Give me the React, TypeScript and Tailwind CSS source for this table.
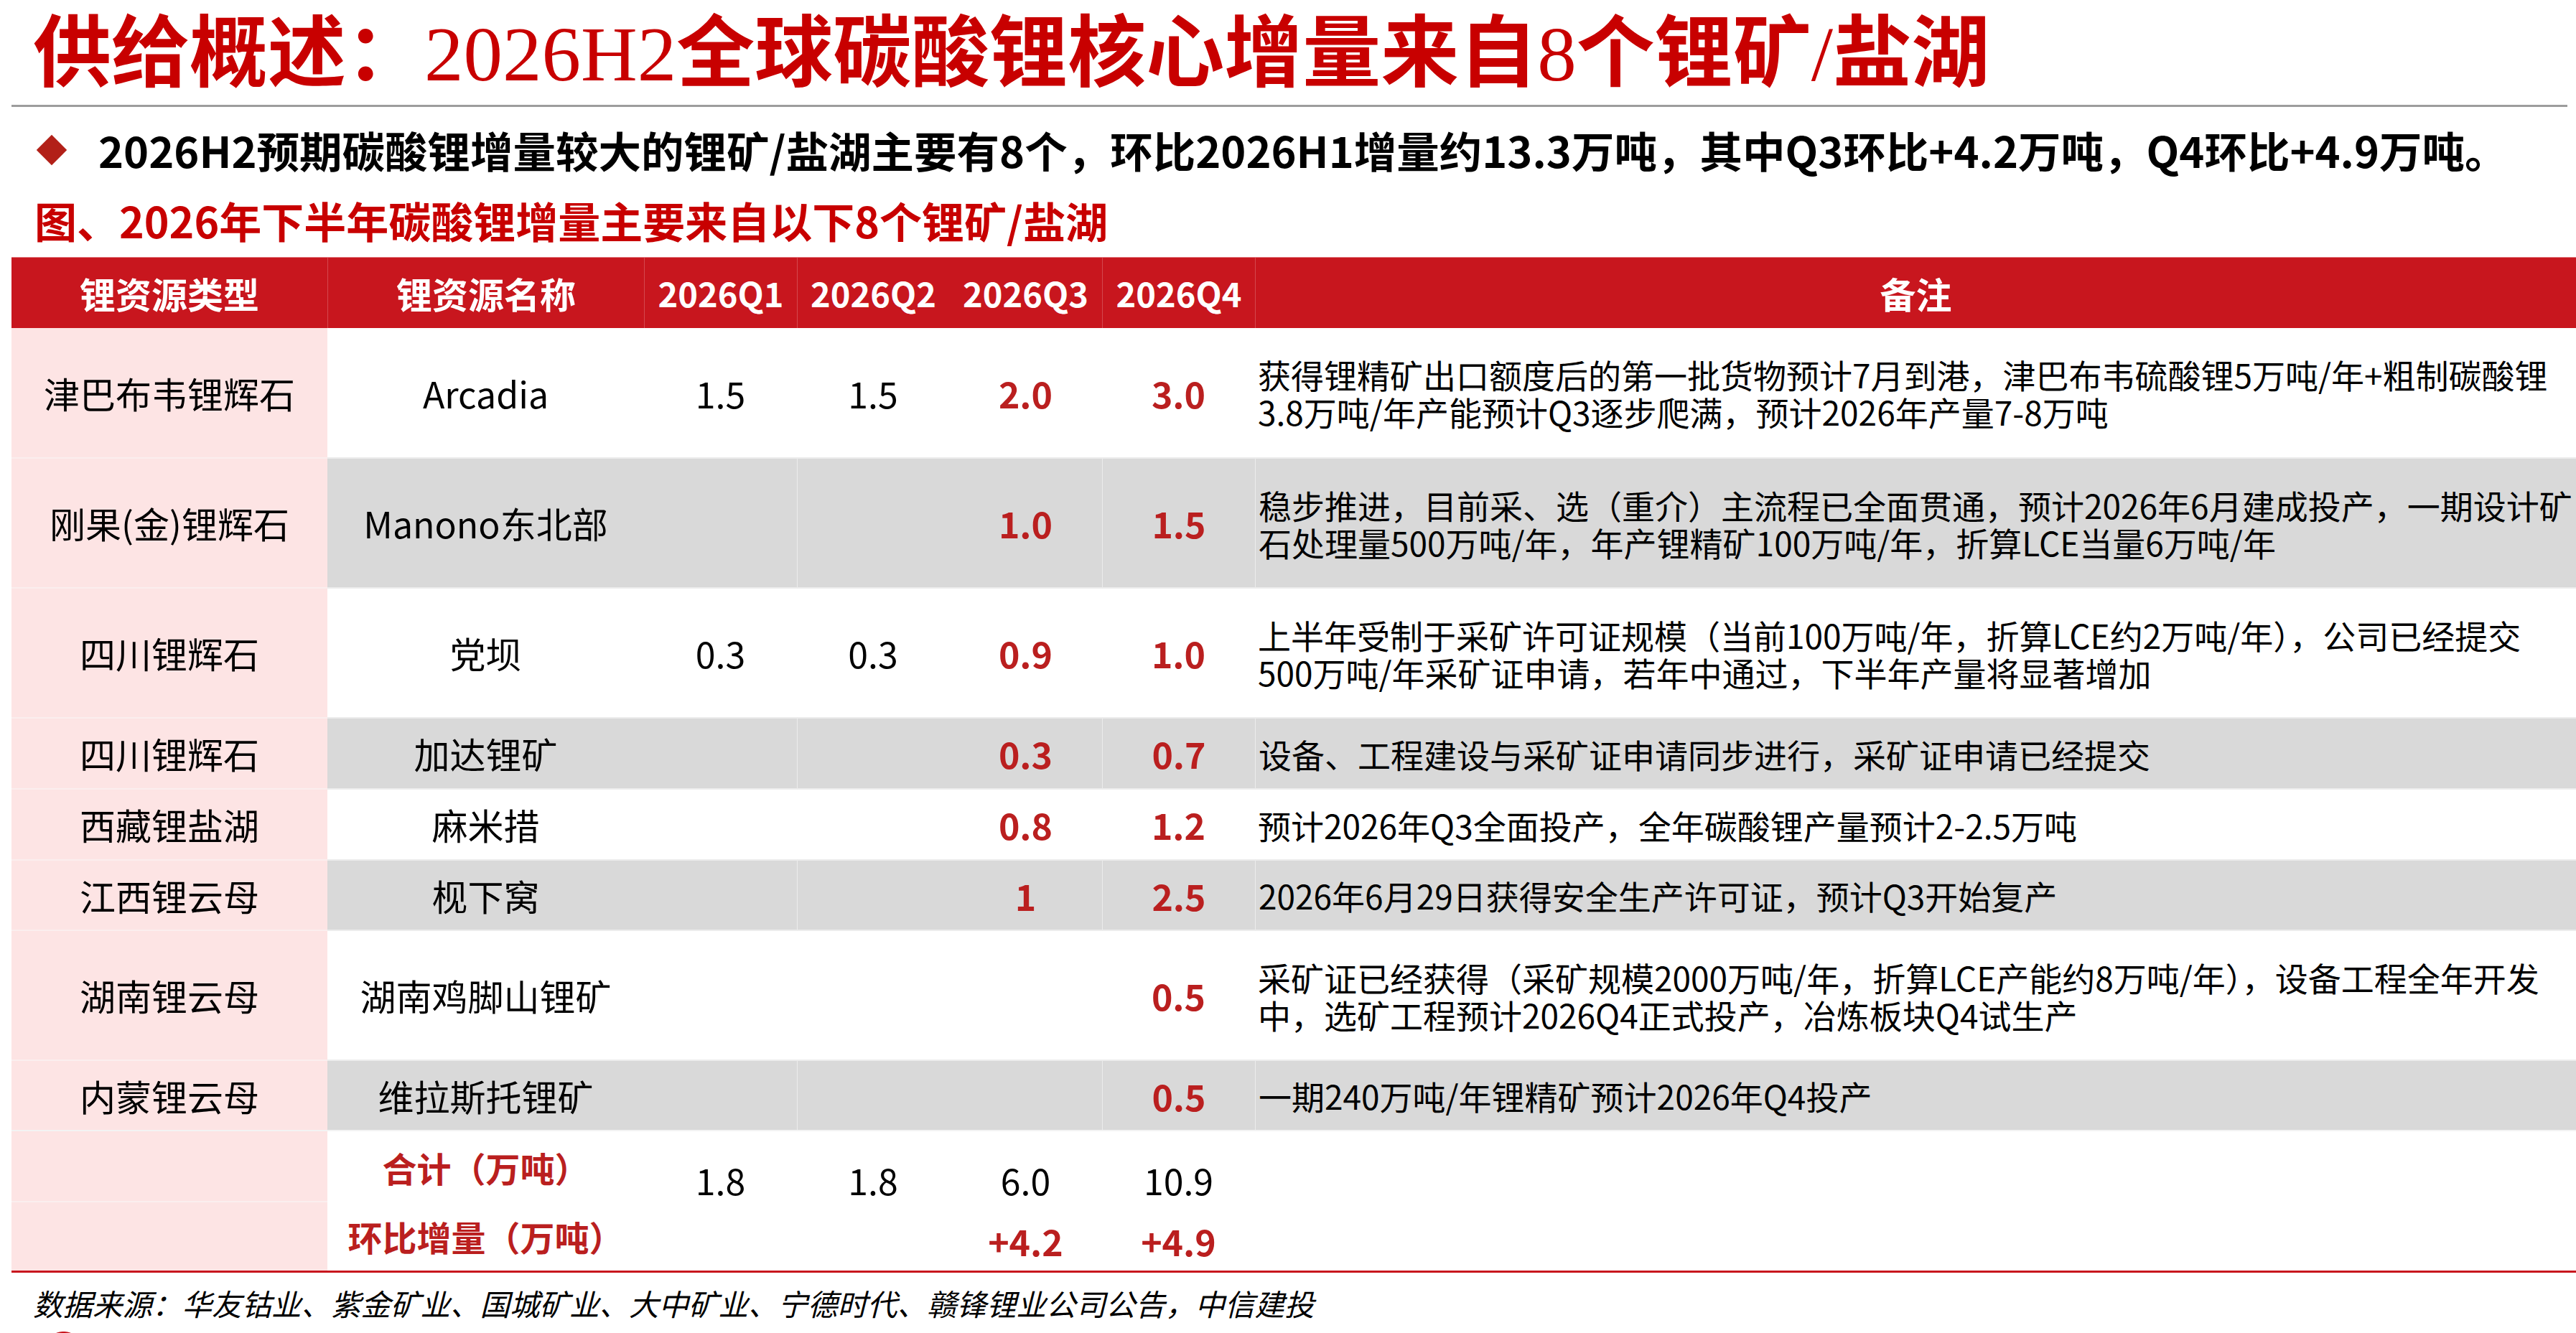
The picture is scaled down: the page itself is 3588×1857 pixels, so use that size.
import React from "react";

type Row = {
  type: string;
  name: string;
  q1?: string;
  q2?: string;
  q3?: string;
  q4?: string;
  remark: string[];
  h: string;
  gray: boolean;
};

const ROWS: Row[] = [
  {
    type: "津巴布韦锂辉石",
    name: "Arcadia",
    q1: "1.5",
    q2: "1.5",
    q3: "2.0",
    q4: "3.0",
    remark: [
      "获得锂精矿出口额度后的第一批货物预计7月到港，津巴布韦硫酸锂5万吨/年+粗制碳酸锂",
      "3.8万吨/年产能预计Q3逐步爬满，预计2026年产量7-8万吨",
    ],
    h: "h-[180px]",
    gray: false,
  },
  {
    type: "刚果(金)锂辉石",
    name: "Manono东北部",
    q3: "1.0",
    q4: "1.5",
    remark: [
      "稳步推进，目前采、选（重介）主流程已全面贯通，预计2026年6月建成投产，一期设计矿",
      "石处理量500万吨/年，年产锂精矿100万吨/年，折算LCE当量6万吨/年",
    ],
    h: "h-[181px]",
    gray: true,
  },
  {
    type: "四川锂辉石",
    name: "党坝",
    q1: "0.3",
    q2: "0.3",
    q3: "0.9",
    q4: "1.0",
    remark: [
      "上半年受制于采矿许可证规模（当前100万吨/年，折算LCE约2万吨/年），公司已经提交",
      "500万吨/年采矿证申请，若年中通过，下半年产量将显著增加",
    ],
    h: "h-[181px]",
    gray: false,
  },
  {
    type: "四川锂辉石",
    name: "加达锂矿",
    q3: "0.3",
    q4: "0.7",
    remark: ["设备、工程建设与采矿证申请同步进行，采矿证申请已经提交"],
    h: "h-[99px]",
    gray: true,
  },
  {
    type: "西藏锂盐湖",
    name: "麻米措",
    q3: "0.8",
    q4: "1.2",
    remark: ["预计2026年Q3全面投产，全年碳酸锂产量预计2-2.5万吨"],
    h: "h-[99px]",
    gray: false,
  },
  {
    type: "江西锂云母",
    name: "枧下窝",
    q3: "1",
    q4: "2.5",
    remark: ["2026年6月29日获得安全生产许可证，预计Q3开始复产"],
    h: "h-[98px]",
    gray: true,
  },
  {
    type: "湖南锂云母",
    name: "湖南鸡脚山锂矿",
    q4: "0.5",
    remark: [
      "采矿证已经获得（采矿规模2000万吨/年，折算LCE产能约8万吨/年），设备工程全年开发",
      "中，选矿工程预计2026Q4正式投产，冶炼板块Q4试生产",
    ],
    h: "h-[181px]",
    gray: false,
  },
  {
    type: "内蒙锂云母",
    name: "维拉斯托锂矿",
    q4: "0.5",
    remark: ["一期240万吨/年锂精矿预计2026年Q4投产"],
    h: "h-[98px]",
    gray: true,
  },
];

const FONT = { fontFamily: '"Noto Sans CJK SC", "Noto Sans", sans-serif' };
const SERIF = { fontFamily: '"Liberation Serif", "Noto Sans CJK SC", serif' };

const GRID = "grid grid-cols-[440px_441px_213px_212px_213px_213px_1fr]";

function DataRow({ r, first }: { r: Row; first: boolean }) {
  const bg = r.gray ? "bg-[#d9d9d9]" : "bg-white";
  const sep = first ? "" : "border-t-2 border-[#ececec]";
  const sepPink = first ? "" : "border-t-2 border-[#fbeeee]";
  const vl = r.gray ? "border-l border-[#e4e4e4]" : "";
  return (
    <div className={`${GRID} ${r.h}`}>
      <div
        className={`bg-[#fde4e4] ${sepPink} flex items-center justify-center text-[50px] text-black`}
      >
        {r.type}
      </div>
      <div
        className={`${bg} ${sep} flex items-center justify-center text-[50px] text-black`}
      >
        {r.name}
      </div>
      <div
        className={`${bg} ${sep} flex items-center justify-center text-[50px] text-black`}
      >
        {r.q1}
      </div>
      <div
        className={`${bg} ${sep} ${vl} flex items-center justify-center text-[50px] text-black`}
      >
        {r.q2}
      </div>
      <div
        className={`${bg} ${sep} flex items-center justify-center text-[50px] font-bold text-[#ba1f1f]`}
      >
        {r.q3}
      </div>
      <div
        className={`${bg} ${sep} ${vl} flex items-center justify-center text-[50px] font-bold text-[#ba1f1f]`}
      >
        {r.q4}
      </div>
      <div
        className={`${bg} ${sep} ${vl} flex flex-col justify-center pl-[4px] text-[46px] leading-[52px] text-black whitespace-nowrap overflow-hidden`}
      >
        {r.remark.map((l, i) => (
          <div key={i}>{l}</div>
        ))}
      </div>
    </div>
  );
}

export default function App() {
  return (
    <div
      className="w-[3588px] h-[1857px] overflow-hidden bg-white"
      style={FONT}
    >
      {/* Title */}
      <div className="h-[146px] pt-[10px] pl-[46px] text-[109px] leading-none font-bold text-[#c80000] whitespace-nowrap">
        供给概述：
        <span className="font-normal" style={SERIF}>
          2026H2
        </span>
        全球碳酸锂核心增量来自
        <span className="font-normal" style={SERIF}>
          8
        </span>
        个锂矿
        <span className="font-normal" style={SERIF}>
          /
        </span>
        盐湖
      </div>
      <div className="ml-[16px] mr-[12px] h-[3px] bg-[#9c9c9c]" />

      {/* Bullet */}
      <div className="mt-[30px] h-[60px] flex items-center">
        <div className="ml-[57px] w-[30px] h-[30px] rotate-45 bg-[#b22018]" />
        <div className="ml-[50px] text-[59.5px] leading-none font-bold text-black whitespace-nowrap">
          2026H2预期碳酸锂增量较大的锂矿/盐湖主要有8个，环比2026H1增量约13.3万吨，其中Q3环比+4.2万吨，Q4环比+4.9万吨。
        </div>
      </div>

      {/* Subtitle */}
      <div className="mt-[38px] pl-[48px] text-[59px] leading-none font-bold text-[#c80000] whitespace-nowrap">
        图、2026年下半年碳酸锂增量主要来自以下8个锂矿/盐湖
      </div>

      {/* Table */}
      <div className="mt-[22px] ml-[16px]">
        <div
          className={`${GRID} h-[99px] bg-[#c8161e] text-white font-bold border-t border-[#e27b80]`}
        >
          <div className="flex items-center justify-center text-[50px]">
            锂资源类型
          </div>
          <div className="flex items-center justify-center text-[50px] border-l border-[#d4474e]">
            锂资源名称
          </div>
          <div className="flex items-center justify-center text-[47px] border-l border-[#d4474e]">
            2026Q1
          </div>
          <div className="flex items-center justify-center text-[47px] border-l border-[#d4474e]">
            2026Q2
          </div>
          <div className="flex items-center justify-center text-[47px]">
            2026Q3
          </div>
          <div className="flex items-center justify-center text-[47px] border-l border-[#d4474e]">
            2026Q4
          </div>
          <div className="flex items-center justify-center text-[50px] border-l border-[#d4474e]">
            备注
          </div>
        </div>

        {ROWS.map((r, i) => (
          <DataRow key={i} r={r} first={i === 0} />
        ))}

        {/* Totals */}
        <div className={`${GRID} h-[99px] border-t-2 border-[#f3f3f3]`}>
          <div className="bg-[#fde4e4]" />
          <div className="flex items-center justify-center pb-[6px] text-[48px] font-bold text-[#ba1f1f]">
            合计（万吨）
          </div>
          <div className="flex items-center justify-center pt-[30px] text-[50px] text-black">
            1.8
          </div>
          <div className="flex items-center justify-center pt-[30px] text-[50px] text-black">
            1.8
          </div>
          <div className="flex items-center justify-center pt-[30px] text-[50px] text-black">
            6.0
          </div>
          <div className="flex items-center justify-center pt-[30px] text-[50px] text-black">
            10.9
          </div>
          <div />
        </div>
        <div className={`${GRID} h-[97px]`}>
          <div className="bg-[#fde4e4] border-t-2 border-[#fbeeee]" />
          <div className="flex items-center justify-center text-[48px] font-bold text-[#ba1f1f]">
            环比增量（万吨）
          </div>
          <div />
          <div />
          <div className="flex items-center justify-center pt-[14px] text-[50px] font-bold text-[#ba1f1f]">
            +4.2
          </div>
          <div className="flex items-center justify-center pt-[14px] text-[50px] font-bold text-[#ba1f1f]">
            +4.9
          </div>
          <div />
        </div>
        <div className="h-[3px] bg-[#c8161e]" />
      </div>

      {/* Footer */}
      <div className="mt-[22px] pl-[46px] text-[41.5px] leading-none italic text-black whitespace-nowrap">
        数据来源：华友钴业、紫金矿业、国城矿业、大中矿业、宁德时代、赣锋锂业公司公告，中信建投
      </div>
      <div className="mt-[18px] ml-[67px] w-[43px] h-[40px] rounded-full bg-[#c8161e]" />
    </div>
  );
}
